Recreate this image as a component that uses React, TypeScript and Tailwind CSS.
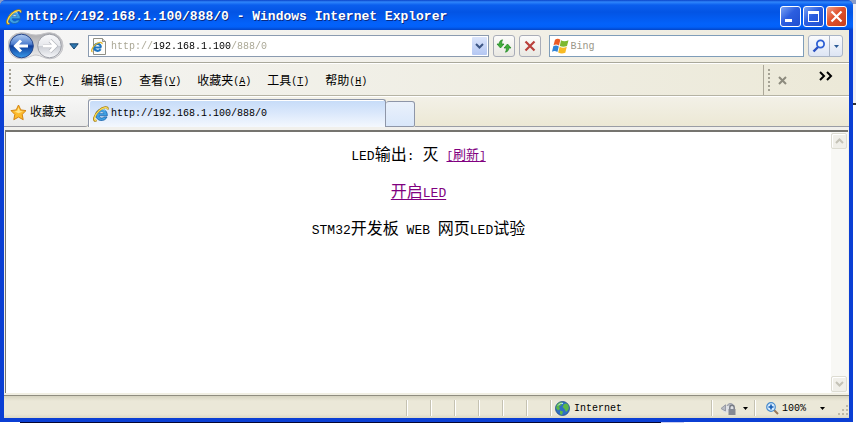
import React from 'react';

const LATIN = 'text-[10px]';

function IeLogo() {
  return (
    <svg width="16" height="16" viewBox="0 0 16 16" fill="none" className="shrink-0" aria-hidden="true">
      <path d="M14.300 9.800H6.200c.2 2.600 3.600 2.800 4.500 1.200h3.300c-2 5.200-11.200 4.800-11.200-2.200 0-7.400 12-7.800 11.500 1z" fill="#3fa0e4" stroke="#155fa8" strokeWidth=".8" />
      <path d="M6.300 7.600c.3-2.300 4.200-2.400 4.600 0z" fill="#e8f4fd" stroke="#155fa8" strokeWidth=".6" />
      <path d="M4 5.500c2-2.500 6-3 8-1" stroke="#9fdcfb" strokeWidth="1" />
      <path d="M3.600 14.400C-.8 16.400.8 8.800 6 4.400 10 1 15.600-.4 14.600 3.600" stroke="#a87f12" strokeWidth="2" />
      <path d="M3.200 14.300C0 15.400 1.400 8.800 6.200 4.600 10 1.400 15 .2 14.400 3.400" stroke="#f9dd58" strokeWidth="1.200" />
    </svg>
  );
}

function PageLogo() {
  return (
    <svg width="16" height="17" viewBox="0 0 16 17" fill="none" className="shrink-0" aria-hidden="true">
      <path d="M2.500.5h9l3 3v13h-12z" fill="#fdfdfb" stroke="#8f8f86" />
      <path d="M11.500.5v3h3" stroke="#8f8f86" fill="#dcdcd4" />
      <path d="M10.200 9.500H3.500M3.200 9.600c0-5 6.800-4.800 6.600-.1M3.200 9.500c.2 4 5 4 6.400 1.700" stroke="#1d74c0" strokeWidth="2.200" />
      <path d="M1.600 13.600C-.4 14.200 1 9 4.500 6.500 7.500 4 11.500 3.500 11 6" stroke="#e0b52a" strokeWidth="1.300" />
    </svg>
  );
}

function NavButtons() {
  return (
    <svg width="56" height="28" viewBox="0 0 56 28" fill="none" aria-hidden="true">
      <defs>
        <linearGradient id="pod" x1="0" y1="0" x2="0" y2="1">
          <stop stopColor="#a9a9ad" />
          <stop offset="1" stopColor="#f2f2f2" />
        </linearGradient>
        <linearGradient id="back" x1="0" y1="0" x2="0" y2="1">
          <stop stopColor="#b3cdf0" />
          <stop offset=".42" stopColor="#4f7fd0" />
          <stop offset=".5" stopColor="#0d3d9c" />
          <stop offset="1" stopColor="#3a9bea" />
        </linearGradient>
        <linearGradient id="fwd" x1="0" y1="0" x2="0" y2="1">
          <stop stopColor="#fafafc" />
          <stop offset=".48" stopColor="#e6e8ec" />
          <stop offset=".52" stopColor="#cbced5" />
          <stop offset="1" stopColor="#f7f8fa" />
        </linearGradient>
      </defs>
      <path d="M13 .8C20 .8 22 3 28 3S36 .8 42 .8a13 13 0 0 1 0 26C36 26.800 33 23 28 23s-8 3.800-15 3.800a13 13 0 0 1 0-26z" fill="url(#pod)" stroke="#c4c4c8" />
      <circle cx="13.500" cy="14" r="11.800" fill="url(#back)" stroke="#26478c" />
      <path d="M20 14H8.500M13 8.500L7.500 14l5.500 5.500" stroke="#fff" strokeWidth="3" />
      <circle cx="41.500" cy="14" r="11.800" fill="url(#fwd)" stroke="#9b9ea6" />
      <path d="M35 14h11.500M42 8.500l5.500 5.500-5.500 5.500" stroke="#b0b3ba" strokeWidth="4" />
      <path d="M35 14h11.500M42 8.500l5.500 5.500-5.500 5.500" stroke="#fff" strokeWidth="2.800" />
    </svg>
  );
}

function DownArrow({ color = '#000' }: { color?: string }) {
  return (
    <svg width="5" height="3" viewBox="0 0 5 3" aria-hidden="true">
      <path d="M0 0h5L2.500 3z" fill={color} />
    </svg>
  );
}

function Grip() {
  return <span className="h-[22px] w-[2px] shrink-0 bg-[repeating-linear-gradient(to_bottom,#a5a294_0_2px,transparent_2px_4px)]" />;
}

const menus = [
  ['文件', 'F'],
  ['编辑', 'E'],
  ['查看', 'V'],
  ['收藏夹', 'A'],
  ['工具', 'T'],
  ['帮助', 'H'],
];

const toolButton =
  'flex h-[22px] w-[22px] shrink-0 items-center justify-center rounded-[3px] border border-[#a9adb8] bg-gradient-to-b from-[#fcfcfb] to-[#e9e8e2]';

const captionButton =
  'flex h-[21px] w-[21px] items-center justify-center rounded-[3px] border border-white';

function TitleBar() {
  return (
    <header className="flex h-[30px] shrink-0 items-center gap-1 rounded-t-md bg-[linear-gradient(to_bottom,#0a43c8_0,#2f86fb_2px,#0b5fee_5px,#0354e4_12px,#0362fb_24px,#0260f8_27px,#0345c8_30px)] px-[6px] pt-[3px]">
      <IeLogo />
      <h1 className="min-w-0 flex-1 truncate text-[13px] leading-5 font-bold text-white [text-shadow:1px_1px_0_#0a2a80]">
        http://192.168.1.100/888/0 - Windows Internet Explorer
      </h1>
      <div className="flex gap-[2px]">
        <button aria-label="Minimize" className={captionButton + ' bg-[linear-gradient(135deg,#7ba3f3,#2c5ee0_45%,#1f4fd0)]'}>
          <svg width="13" height="13" aria-hidden="true"><path d="M1 9h7v3H1z" fill="#fff" /></svg>
        </button>
        <button aria-label="Maximize" className={captionButton + ' bg-[linear-gradient(135deg,#7ba3f3,#2c5ee0_45%,#1f4fd0)]'}>
          <svg width="13" height="13" aria-hidden="true"><path d="M1 1h11v11H1zM2 4v7h9V4z" fill="#fff" fillRule="evenodd" /></svg>
        </button>
        <button aria-label="Close" className={captionButton + ' bg-[linear-gradient(135deg,#f0a08a,#e0502c_45%,#c8401c)]'}>
          <svg width="13" height="13" aria-hidden="true"><path d="M1.500 1.500l10 10M11.500 1.500l-10 10" stroke="#fff" strokeWidth="2.200" /></svg>
        </button>
      </div>
    </header>
  );
}

function AddressRow() {
  return (
    <div className="flex h-8 shrink-0 items-center bg-gradient-to-r from-[#f6f6f6] to-[#eeebdd] pr-[6px] pl-1">
      <div className="relative flex h-7 w-14 shrink-0">
        <NavButtons />
        <button aria-label="Back" className="absolute inset-y-0 left-0 w-7" />
        <button aria-label="Forward" className="absolute inset-y-0 right-0 w-7" />
      </div>
      <button aria-label="Recent pages" className="flex h-5 w-5 shrink-0 items-center justify-center">
        <svg width="10" height="7" viewBox="0 0 10 7" aria-hidden="true"><path d="M.8.8h8.400L5 6z" fill="#2e77b0" stroke="#17446f" /></svg>
      </button>
      <div className="ml-1 flex h-[22px] min-w-0 flex-[401] items-center border border-[#8b9bb0] bg-white pr-[1px] pl-[2px]">
        <PageLogo />
        <input
          aria-label="Address"
          defaultValue="http://192.168.1.100/888/0"
          className="ml-1 h-5 min-w-0 flex-1 bg-[linear-gradient(to_right,#a5a28f_42px,#000_42px,#000_120px,#a5a28f_120px)] bg-clip-text text-[10px] text-transparent outline-none"
        />
        <button aria-label="Show addresses" className="flex h-[18px] w-[15px] items-center justify-center rounded-[1px] bg-gradient-to-b from-[#dbe5fb] to-[#b4c7f2]">
          <svg width="9" height="7" aria-hidden="true"><path d="M1 1l3.500 3.500L8 1" fill="none" stroke="#3d5685" strokeWidth="2" /></svg>
        </button>
      </div>
      <button aria-label="Refresh" className={toolButton + ' ml-1'}>
        <svg width="16" height="14" viewBox="0 0 16 14" aria-hidden="true">
          <path d="M6.500.8C4 1.500 3.200 3 3.200 5H1l3.500 4L8 5H5.600c0-1.600.2-2.800.9-4.200z" fill="#3fae3a" stroke="#1d821f" strokeWidth=".7" />
          <path d="M9.500 13.200c2.500-.7 3.300-2.200 3.300-4.200H15l-3.500-4L8 9h2.400c0 1.600-.2 2.800-.9 4.200z" fill="#3fae3a" stroke="#1d821f" strokeWidth=".7" />
        </svg>
      </button>
      <button aria-label="Stop" className={toolButton + ' ml-1'}>
        <svg width="12" height="12" aria-hidden="true"><path d="M1.500 1.500l9 9M10.500 1.500l-9 9" stroke="#b9403c" strokeWidth="2.200" /></svg>
      </button>
      <div className="ml-2 flex h-[22px] min-w-0 flex-[255] items-center border border-[#7f9db9] bg-white pl-[2px]">
        <svg width="17" height="16" viewBox="0 0 17 16" className="shrink-0" aria-hidden="true">
          <path d="M3 1.800C5 .4 6.800.6 8.300 1.800L7 7.500C5 6.300 3.300 6.300 1.500 7.300z" fill="#ec5a24" />
          <path d="M9 2.300c2.200 1.200 4.500 1.200 7.500 0L15 7.900c-2.700 1-4.900 1-7.200 0z" fill="#7cb82f" />
          <path d="M1.300 8.200C3.300 7.200 5 7.400 6.800 8.400L5.400 14C3.500 12.700 1.800 12.700 0 13.700z" fill="#2f83d6" />
          <path d="M7.600 8.800c2.200 1.200 4.600 1.200 7.200 0L13.300 14.700c-2.700 1.200-4.900 1-7.100-.3z" fill="#f8bb24" />
        </svg>
        <input aria-label="Search" placeholder="Bing" className="ml-[2px] h-5 min-w-0 flex-1 text-[10px] outline-none placeholder:text-[#9a9788]" />
      </div>
      <div className="ml-1 flex h-[22px] w-[35px] shrink-0 overflow-hidden rounded-[3px] border border-[#a9b4c6] bg-gradient-to-b from-[#fafbfd] to-[#dde5f4]">
        <button aria-label="Go" className="flex w-[21px] items-center justify-center border-r border-[#a9b4c6]">
          <svg width="14" height="14" fill="none" aria-hidden="true">
            <path d="M6 8l-4.500 4.500" stroke="#2a50c0" strokeWidth="2.400" />
            <circle cx="8.500" cy="5" r="3.600" stroke="#2d5fd4" strokeWidth="1.800" fill="#eef5ff" />
          </svg>
        </button>
        <button aria-label="Search options" className="flex flex-1 items-center justify-center"><DownArrow color="#2a5a96" /></button>
      </div>
    </div>
  );
}

function MenuRow() {
  return (
    <nav className="flex h-[34px] shrink-0 items-center border-t border-b border-t-[#a9a89b] border-b-[#b5b3a4] bg-gradient-to-r from-[#f4f4f2] to-[#ece9d8] pt-[2px] pr-4 pl-[5px] shadow-[inset_0_1px_0_#fff]">
      <Grip />
      <div className="flex gap-4 pt-[3px] pl-[12px]">
        {menus.map(([name, key]) => (
          <button key={key} className="flex items-center whitespace-nowrap text-xs leading-4">
            {name}
            <span className={LATIN}>(<u className="underline-offset-1">{key}</u>)</span>
          </button>
        ))}
      </div>
      <div className="ml-auto flex h-full items-center">
        <span className="mr-1 h-[30px] w-px bg-[#aca899]" />
        <Grip />
        <button aria-label="Close toolbar" className="mr-3 ml-2">
          <svg width="9" height="9" aria-hidden="true"><path d="M1 1l7 7M8 1L1 8" stroke="#8d8b7e" strokeWidth="2" /></svg>
        </button>
        <button aria-label="More" className="mb-2 ml-5">
          <svg width="14" height="10" fill="none" aria-hidden="true"><path d="M1 1l4 4-4 4M8 1l4 4-4 4" stroke="#000" strokeWidth="2" /></svg>
        </button>
      </div>
    </nav>
  );
}

function TabRow() {
  return (
    <div className="flex h-[31px] shrink-0 items-stretch bg-[linear-gradient(to_bottom,#f3f1e8,#ece8d4)] shadow-[inset_0_1px_0_#fff]">
      <button className="flex w-[84px] items-center gap-[3px] rounded-br-[3px] border-b border-[#9a9aa0] bg-gradient-to-b from-[#f7f7f6] to-[#ebebea] pt-[3px] pl-[6px] text-xs leading-4">
        <svg width="17" height="17" viewBox="0 0 17 17" aria-hidden="true">
          <path d="M8.500 1l2.300 4.900 5.200.7-3.800 3.800 1 5.300-4.700-2.600-4.700 2.600 1-5.300L1 6.600l5.200-.7z" fill="#fdbb2d" stroke="#d48411" strokeLinejoin="round" />
          <path d="M8.500 3.500l1.500 3.400 3 .5-4.500 1.800-4-1.800 2.700-.5z" fill="#ffe48a" />
        </svg>
        收藏夹
      </button>
      <button className="mt-[3px] flex min-w-0 basis-[298px] items-center gap-[2px] rounded-t-[3px] border border-b-0 border-[#8e96a8] bg-[linear-gradient(to_bottom,#c5dbf8,#d9e7fb_45%,#f4f8fe)] pl-[4px] text-[10px] leading-4 shadow-[inset_1px_1px_0_#fff]">
        <IeLogo />
        http://192.168.1.100/888/0
      </button>
      <button aria-label="New tab" className="mt-[5px] w-[29px] shrink-0 rounded-t-[3px] rounded-br-[2px] border border-l-0 border-[#8e96a8] bg-[linear-gradient(to_bottom,#eaf1fb,#d9e7fa)]" />
      <span className="flex-1 border-b border-[#9a9da5]" />
    </div>
  );
}

function ScrollButton({ up = false }: { up?: boolean }) {
  return (
    <button
      aria-label={up ? 'Scroll up' : 'Scroll down'}
      className="flex h-4 w-4 items-center justify-center rounded-[2px] border border-[#dddcd2] bg-[#f0efe9] shadow-[inset_1px_1px_0_#fff]"
    >
      <svg width="9" height="6" fill="none" aria-hidden="true">
        <path d={up ? 'M1 5l3.500-3.500L8 5' : 'M1 1l3.500 3.500L8 1'} stroke="#c4c2b6" strokeWidth="2" />
      </svg>
    </button>
  );
}

const visitedLink = 'text-[#800080] underline underline-offset-2 [text-decoration-skip-ink:none]';

function Page() {
  return (
    <div className="flex flex-1 border-t-[3px] border-b-2 border-t-[#f1f0ec] border-b-[#f1efe3] bg-[#f1f0ec] px-px">
      <div className="flex flex-1 border-t-2 border-l border-[#75746f] bg-white">
        <main className="flex flex-1 flex-col items-center gap-[17px] pt-[14px] text-base leading-5">
          <p className="flex h-5 items-center gap-2">
            <span><span className="text-[13px]">LED</span>输出<span className="text-[13px]">:</span></span>
            <span>灭</span>
            <a href="#refresh" className={'text-[13px] leading-4 ' + visitedLink}><span className="text-[11px]">[</span>刷新<span className="text-[11px]">]</span></a>
          </p>
          <p className="h-5"><a href="#on" className={visitedLink}>开启<span className="text-[13px]">LED</span></a></p>
          <p className="h-5"><span className="text-[13px]">STM32</span>开发板<span className="text-[13px]"> WEB </span>网页<span className="text-[13px]">LED</span>试验</p>
        </main>
        <div className="flex w-[17px] flex-col items-start justify-between bg-[#f8f8f5] py-px">
          <ScrollButton up />
          <ScrollButton />
        </div>
      </div>
    </div>
  );
}

function StatusBar() {
  return (
    <footer className="flex h-[23px] shrink-0 items-center border-t border-[#8f8d80] bg-[linear-gradient(to_bottom,#d6d3c0,#ebe8d8_5px,#ebe8d8_18px,#dcd9c5)] pt-[2px] text-[10px]">
      <div className="flex-1" />
      {[0, 1, 2, 3, 4, 5].map((n) => (
        <span key={n} className="h-4 w-6 border-l border-[#c5c2b2] shadow-[inset_1px_0_0_#fff]" />
      ))}
      <div className="flex h-4 w-[161px] items-center gap-1 border-l border-[#c5c2b2] pl-1 shadow-[inset_1px_0_0_#fff]">
        <svg width="15" height="15" viewBox="0 0 15 15" aria-hidden="true">
          <circle cx="7.500" cy="7.500" r="7" fill="#2e6fc4" stroke="#1d4a86" strokeWidth=".8" />
          <path d="M2 3.500C4 1 6 1 7.500 1.500L6.500 4 4 5.500 5 8 3 9.500 1 7zM9 3l3-.5c2 2 2 4 1.500 6L11 11 9.500 8 7.500 6zM5 9.500l3 1-1 3.500-2-1z" fill="#5cb848" />
          <path d="M3 4.500c1.500-2 3.500-2.500 5-2" stroke="#c9ecff" fill="none" />
        </svg>
        Internet
      </div>
      <button aria-label="Privacy and filtering" className="flex h-4 w-[43px] items-center justify-between border-l border-[#c5c2b2] pr-[6px] pl-2 shadow-[inset_1px_0_0_#fff]">
        <svg width="17" height="14" viewBox="0 0 17 14" fill="none" aria-hidden="true">
          <path d="M1 7.500L6 3.500V6c1-3 4-5 7-3 1.500 1 2 3 2 5L8 11.500H4z" fill="#dfe1e6" />
          <path d="M1 7.500L5.500 3.800V10zM7 5c1-3 5-3.500 7 0" fill="#b9bcc4" stroke="#989ba5" />
          <path d="M9.800 8V6.500a2.200 2.200 0 0 1 4.400 0V8" stroke="#777b84" strokeWidth="1.400" />
          <path d="M8.500 8h7v6h-7z" fill="#858993" />
        </svg>
        <DownArrow />
      </button>
      <div className="flex h-4 w-[95px] items-center border-l border-[#c5c2b2] pl-[11px] shadow-[inset_1px_0_0_#fff]">
        <button className="flex items-center gap-[3px]">
          <svg width="13" height="13" viewBox="0 0 13 13" fill="none" aria-hidden="true">
            <path d="M8 8l4 4" stroke="#9a785a" strokeWidth="2" />
            <circle cx="5" cy="5" r="4.300" fill="#d6ecff" stroke="#4a8ccc" strokeWidth="1.200" />
            <path d="M5 2.500v5M2.500 5h5" stroke="#145cb4" strokeWidth="1.600" />
          </svg>
          100%
        </button>
        <button aria-label="Zoom level" className="ml-[14px] flex h-4 items-center"><DownArrow /></button>
        <svg width="11" height="11" className="ml-auto self-end" fill="#bdb9a8" aria-hidden="true">
          <path d="M8 0h2v2H8zM8 4h2v2H8zM8 8h2v2H8zM4 4h2v2H4zM4 8h2v2H4zM0 8h2v2H0z" />
        </svg>
      </div>
    </footer>
  );
}

export default function App() {
  return (
    <div className="flex min-h-screen flex-col bg-[linear-gradient(to_right,#fff_20px,#050530_20px,#050530_661px,#c9ccf0_661px,#c9ccf0_684px,#fff_684px)] font-['Liberation_Mono','Noto_Sans_CJK_SC',monospace] text-black">
      <div className="flex flex-1 bg-[linear-gradient(to_bottom,#8a9cc8_4px,#f1f0f3_4px,#f1f0f3_103px,#333_103px,#333_105px,#fff_105px)] pr-[3px]">
        <div className="flex min-w-0 flex-1 flex-col rounded-t-md bg-[#0a3fd0]">
          <TitleBar />
          <div className="flex flex-1 flex-col border-r-4 border-b-4 border-l-4 border-[#0b3fd4]">
            <AddressRow />
            <MenuRow />
            <TabRow />
            <Page />
            <StatusBar />
          </div>
        </div>
      </div>
      <div className="h-px" />
    </div>
  );
}
